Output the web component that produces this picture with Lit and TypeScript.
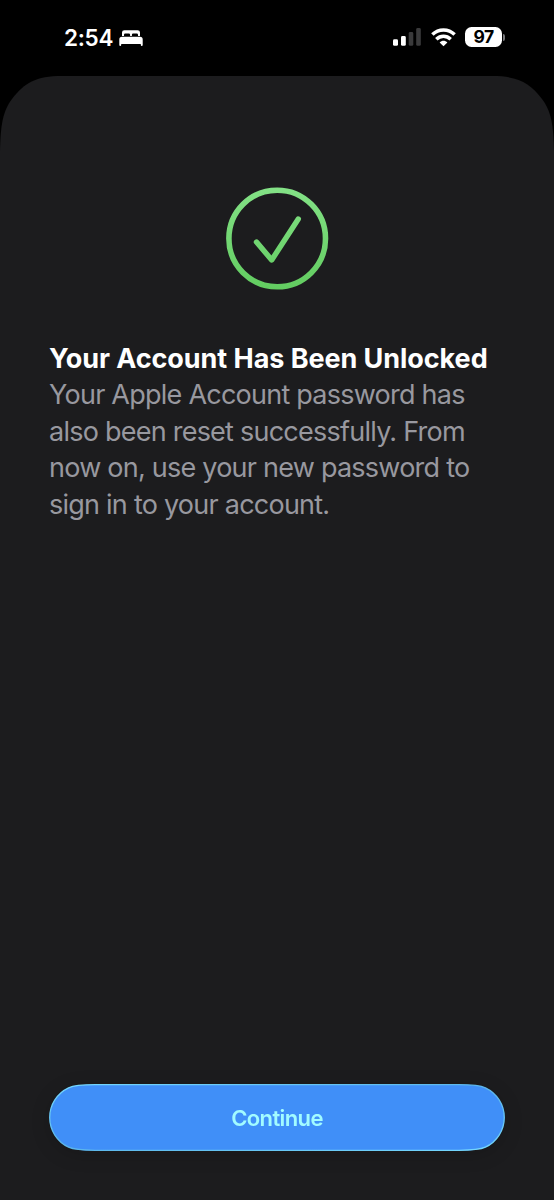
import { LitElement, html, css } from "lit";
import { customElement } from "lit/decorators.js";

@customElement("status-bar")
class StatusBar extends LitElement {
  static styles = css`
    :host { display: flex; align-items: center; justify-content: space-between; height: 76px; padding: 0 49px 2px 64px; box-sizing: border-box; color: #fff; }
    .group { display: flex; align-items: center; }
    .time { font-size: 22.5px; font-weight: 600; line-height: 28px; letter-spacing: -0.3px; width: 55px; padding-top: 2px; white-space: nowrap; }
    svg { display: block; }
    .bed { margin-top: 1px; }
    .signal { margin-right: 10px; }
    .wifi { margin-right: 9px; }
    .battery { display: flex; align-items: center; }
    .level { width: 37px; height: 20px; border-radius: 6.5px; background: #fff; color: #000; font-size: 17.5px; font-weight: 700; line-height: 20px; text-align: center; letter-spacing: -0.6px; }
    .tip { width: 2px; height: 7px; margin-left: 1px; border-radius: 0 2px 2px 0; background: #77777a; }
  `;
  render() {
    return html`
      <div class="group">
        <span class="time">2:54</span>
        <svg class="bed" width="24" height="18" viewBox="0 0 24 18" fill="#fff">
          <path d="M3 7V3.6Q3 1.2 5.4 1.2H18.6Q21 1.2 21 3.6V7H19V5.7Q19 4.4 17.7 4.4H14.2Q12.9 4.4 12.9 5.7V7H11.1V5.7Q11.1 4.4 9.8 4.4H6.3Q5 4.4 5 5.7V7Z" />
          <path d="M.3 10.5Q.3 7.7 3 7.7H21Q23.7 7.7 23.7 10.5V16Q23.7 17 22.7 17Q21.9 17 21.8 16V15H2.2V16Q2.1 17 1.3 17Q.3 17 .3 16Z" />
        </svg>
      </div>
      <div class="group">
        <svg class="signal" width="28" height="20" viewBox="0 0 28 20">
          <rect x="0" y="12.2" width="5" height="6.6" rx="1.4" fill="#fff" />
          <rect x="8" y="9" width="4.8" height="9.8" rx="1.4" fill="#fff" />
          <rect x="15.7" y="5" width="4.6" height="13.8" rx="1.4" fill="#3a3a3b" />
          <rect x="23.2" y="1" width="4.6" height="17.8" rx="1.4" fill="#3a3a3b" />
        </svg>
        <svg class="wifi" width="25" height="20" viewBox="0 0 25 20" fill="none" stroke="#fff" stroke-width="3.5">
          <path d="M1.4 7.6C7.6 1.4 17.4 1.4 23.6 7.6" />
          <path d="M5.3 12.2C9.5 8.2 15.5 8.2 19.7 12.2" />
          <path d="M12.5 19.3L8.6 15.4C10.9 13.2 14.1 13.2 16.4 15.4Z" fill="#fff" stroke="none" />
        </svg>
        <div class="battery"><div class="level">97</div><div class="tip"></div></div>
      </div>
    `;
  }
}

@customElement("success-badge")
class SuccessBadge extends LitElement {
  static styles = css`
    :host { display: block; width: 104px; height: 104px; }
    svg { display: block; }
  `;
  render() {
    return html`
      <svg width="104" height="104" viewBox="0 0 104 104" fill="none">
        <defs>
          <linearGradient id="green" gradientUnits="userSpaceOnUse" x1="0" y1="0" x2="0" y2="104">
            <stop offset="0" stop-color="#84e287" />
            <stop offset="1" stop-color="#62cc60" />
          </linearGradient>
        </defs>
        <circle cx="52.2" cy="52.5" r="48.3" stroke="url(#green)" stroke-width="5.6" />
        <path d="M31.5 56L46.7 74L73.3 33" stroke="url(#green)" stroke-width="5.4" stroke-linecap="round" stroke-linejoin="round" />
      </svg>
    `;
  }
}

@customElement("primary-button")
class PrimaryButton extends LitElement {
  static styles = css`
    :host { display: block; }
    .button { display: grid; width: 456px; height: 67px; padding: 0; border: 0; background: none; font: inherit; filter: drop-shadow(0 4px 9px rgba(0, 0, 0, 0.16)); }
    .button > * { grid-area: 1 / 1; }
    .shape { display: block; }
    .label { align-self: center; justify-self: center; color: #a2fbff; font-size: 22px; font-weight: 600; line-height: 28px; letter-spacing: -0.6px; }
  `;
  render() {
    return html`
      <button class="button">
        <svg class="shape" width="456" height="67" viewBox="0 0 456 67">
          <defs>
            <linearGradient id="edge" x1="0" y1="0" x2="1" y2="1">
              <stop offset="0" stop-color="#75d8ff" />
              <stop offset=".5" stop-color="#5bb5ea" />
              <stop offset="1" stop-color="#75d8ff" />
            </linearGradient>
          </defs>
          <path d="M46 .7H410C420 .7 430 .8 436.4 3.8A32.8 32.8 0 0 1 436.4 63.2C430 66.2 420 66.3 410 66.3H46C36 66.3 26 66.2 19.6 63.2A32.8 32.8 0 0 1 19.6 3.8C26 .8 36 .7 46 .7Z" fill="#408ff8" stroke="url(#edge)" stroke-width="1.3" />
        </svg>
        <span class="label"><slot></slot></span>
      </button>
    `;
  }
}

@customElement("app-root")
class AppRoot extends LitElement {
  static styles = css`
    :host { display: flex; flex-direction: column; width: 554px; height: 1200px; overflow: hidden; background: #000; font-family: Inter, "Liberation Sans", sans-serif; }
    .sheet { flex: 1; display: flex; flex-direction: column; align-items: center; box-sizing: border-box; padding: 110px 49px 49px; background: #1c1c1e; clip-path: path("M0 1124V76C.5 48 3 35 12 23C24 7 36 0 62 0H492C518 0 530 7 542 23C551 35 553.5 48 554 76V1124Z"); }
    .copy { align-self: stretch; margin-top: 51px; }
    .title { margin: 0; color: #fff; font-size: 27px; font-weight: 700; line-height: 36px; letter-spacing: -0.06px; white-space: nowrap; }
    .body { margin: 0; color: #98989f; font-size: 27px; font-weight: 400; line-height: 36.5px; letter-spacing: -0.76px; white-space: nowrap; }
    .action { margin-top: auto; }
  `;
  render() {
    return html`
      <status-bar></status-bar>
      <main class="sheet">
        <success-badge></success-badge>
        <div class="copy">
          <h1 class="title">Your Account Has Been Unlocked</h1>
          <p class="body">Your Apple Account password has<br />also been reset successfully. From<br />now on, use your new password to<br />sign in to your account.</p>
        </div>
        <primary-button class="action">Continue</primary-button>
      </main>
    `;
  }
}
